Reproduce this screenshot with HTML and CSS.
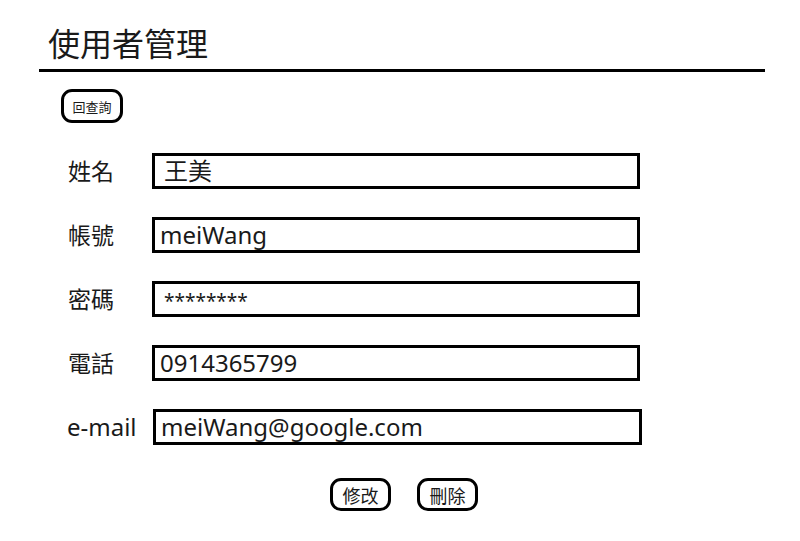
FILE: index.html
```html
<!DOCTYPE html>
<html lang="zh-Hant">
<head>
<meta charset="utf-8">
<title>使用者管理</title>
<link rel="stylesheet" href="styles.css">
</head>
<body>
<div class="page">
  <h1 class="title">使用者管理</h1>
  <div class="toolbar">
    <button class="btn btn-small" type="button">回查詢</button>
  </div>
  <form class="form">
    <div class="row">
      <label class="label">姓名</label>
      <div class="field field-cjk">王美</div>
    </div>
    <div class="row">
      <label class="label">帳號</label>
      <div class="field">meiWang</div>
    </div>
    <div class="row">
      <label class="label">密碼</label>
      <div class="field field-pass">********</div>
    </div>
    <div class="row">
      <label class="label">電話</label>
      <div class="field">0914365799</div>
    </div>
    <div class="row">
      <label class="label label-latin">e-mail</label>
      <div class="field field-wide">meiWang@google.com</div>
    </div>
    <div class="actions">
      <button class="btn btn-action" type="button">修改</button>
      <button class="btn btn-action" type="button">刪除</button>
    </div>
  </form>
</div>
</body>
</html>
```

FILE: styles.css
```css
html, body {
  margin: 0;
  padding: 0;
  background: #ffffff;
}

body {
  font-family: "Noto Sans", "Noto Sans CJK TC", sans-serif;
  color: #000000;
}

.page {
  padding: 24px 35px 0 39px;
}

.title {
  margin: 0;
  padding: 0 0 5px 9px;
  font-size: 32px;
  line-height: 40px;
  font-weight: normal;
  color: #1a1a1a;
  border-bottom: 3px solid #000000;
}

.toolbar {
  display: flex;
  margin-top: 17px;
  padding-left: 22px;
}

.btn {
  font-family: "Noto Sans", "Noto Sans CJK TC", sans-serif;
  background: #ffffff;
  border: 3px solid #000000;
  border-radius: 11px;
  color: #1a1a1a;
  padding: 0;
  display: flex;
  align-items: center;
  justify-content: center;
}

.btn-small {
  width: 62px;
  height: 34px;
  font-size: 13px;
}

.form {
  display: flex;
  flex-direction: column;
  gap: 28px;
  margin-top: 30px;
  padding-left: 28px;
}

.row {
  display: flex;
  align-items: center;
}

.label {
  width: 85px;
  font-size: 23px;
  line-height: 30px;
  color: #1a1a1a;
  padding-left: 1px;
  box-sizing: border-box;
}

.label-latin {
  font-size: 24px;
  padding-left: 0;
}

.field {
  box-sizing: border-box;
  width: 488px;
  height: 36px;
  border: 3px solid #000000;
  padding: 0 5px;
  font-size: 24px;
  line-height: 30px;
  color: #1a1a1a;
  white-space: nowrap;
}

.field-cjk {
  padding-left: 9px;
}

.field-pass {
  padding: 4px 0 0 9px;
  font-size: 19px;
  line-height: 26px;
}

.field-wide {
  width: 489px;
  margin-left: 1px;
}

.actions {
  display: flex;
  justify-content: center;
  gap: 26px;
  margin-top: 5px;
  padding-right: 24px;
}

.btn-action {
  width: 61px;
  height: 33px;
  font-size: 18px;
}
```
